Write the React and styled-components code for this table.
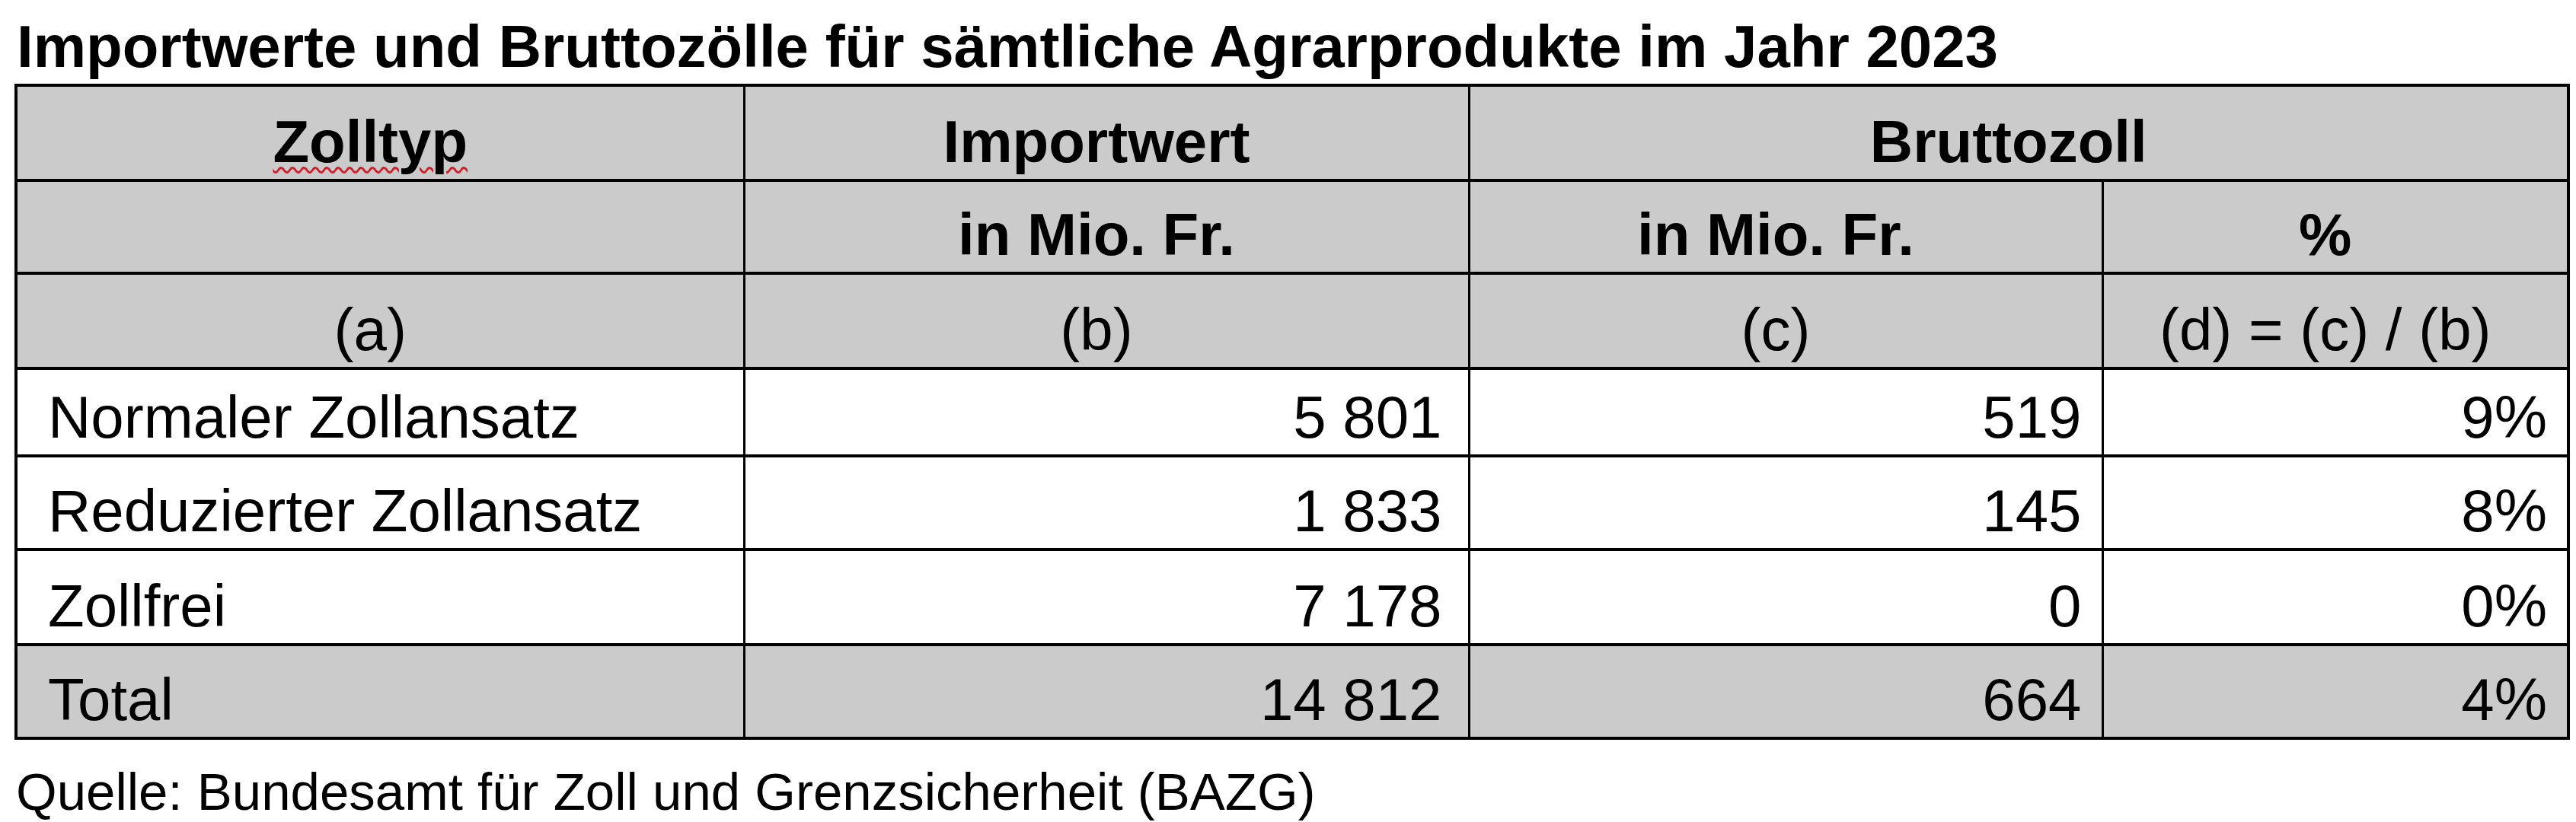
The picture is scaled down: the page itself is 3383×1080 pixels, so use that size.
import React from "react";
import styled, { createGlobalStyle } from "styled-components";

const GlobalStyle = createGlobalStyle`
  html, body {
    margin: 0;
    padding: 0;
    background: #ffffff;
  }
  body {
    font-family: "Liberation Sans", Arial, sans-serif;
    color: #000;
  }
`;

const Page = styled.div`
  width: 3383px;
  height: 1080px;
  padding: 16px 0 0 19px;
  box-sizing: border-box;
  overflow: hidden;
`;

const Title = styled.h1`
  margin: 0 0 4px 3px;
  font-size: 78px;
  font-weight: bold;
  line-height: 90px;
  white-space: nowrap;
`;

const Table = styled.table`
  border-collapse: collapse;
  table-layout: fixed;
  width: 3352px;
  border: 4px solid #000;
`;

const Row = styled.tr`
  height: ${(p) => p.h}px;
  background: ${(p) => (p.shaded ? "#cbcbcb" : "#ffffff")};
`;

const Cell = styled.td`
  border-top: 4px solid #000;
  border-bottom: 4px solid #000;
  border-left: 3px solid #000;
  border-right: 3px solid #000;
  padding: 0 ${(p) => p.padRight || 26}px 4px
    ${(p) => (p.align === "left" ? 40 : 0)}px;
  font-size: 78px;
  line-height: 90px;
  font-weight: ${(p) => (p.bold ? "bold" : "normal")};
  text-align: ${(p) => p.align || "center"};
  vertical-align: bottom;
  white-space: nowrap;
`;

const Misspelled = styled.span`
  text-decoration: underline wavy #d0202a;
  text-decoration-thickness: 3px;
  text-underline-offset: 6px;
`;

const Source = styled.p`
  margin: 30px 0 0 2px;
  font-size: 69px;
  line-height: 78px;
  white-space: nowrap;
`;

const rows = [
  { name: "Normaler Zollansatz", imp: "5 801", zoll: "519", pct: "9%", h: 115 },
  { name: "Reduzierter Zollansatz", imp: "1 833", zoll: "145", pct: "8%", h: 123 },
  { name: "Zollfrei", imp: "7 178", zoll: "0", pct: "0%", h: 125 },
];

export default function App() {
  return (
    <>
      <GlobalStyle />
      <Page>
        <Title>Importwerte und Bruttozölle für sämtliche Agrarprodukte im Jahr 2023</Title>
        <Table>
          <colgroup>
            <col style={{ width: 956 }} />
            <col style={{ width: 952 }} />
            <col style={{ width: 832 }} />
            <col style={{ width: 612 }} />
          </colgroup>
          <tbody>
            <Row shaded h={125}>
              <Cell bold>
                <Misspelled>Zolltyp</Misspelled>
              </Cell>
              <Cell bold>Importwert</Cell>
              <Cell bold colSpan={2}>Bruttozoll</Cell>
            </Row>
            <Row shaded h={122}>
              <Cell bold />
              <Cell bold>in Mio. Fr.</Cell>
              <Cell bold>in Mio. Fr.</Cell>
              <Cell bold>%</Cell>
            </Row>
            <Row shaded h={125}>
              <Cell>(a)</Cell>
              <Cell>(b)</Cell>
              <Cell>(c)</Cell>
              <Cell>(d) = (c) / (b)</Cell>
            </Row>
            {rows.map((r) => (
              <Row key={r.name} h={r.h}>
                <Cell align="left">{r.name}</Cell>
                <Cell align="right" padRight={34}>{r.imp}</Cell>
                <Cell align="right">{r.zoll}</Cell>
                <Cell align="right">{r.pct}</Cell>
              </Row>
            ))}
            <Row shaded h={123}>
              <Cell align="left">Total</Cell>
              <Cell align="right" padRight={34}>14 812</Cell>
              <Cell align="right">664</Cell>
              <Cell align="right">4%</Cell>
            </Row>
          </tbody>
        </Table>
        <Source>Quelle: Bundesamt für Zoll und Grenzsicherheit (BAZG)</Source>
      </Page>
    </>
  );
}
